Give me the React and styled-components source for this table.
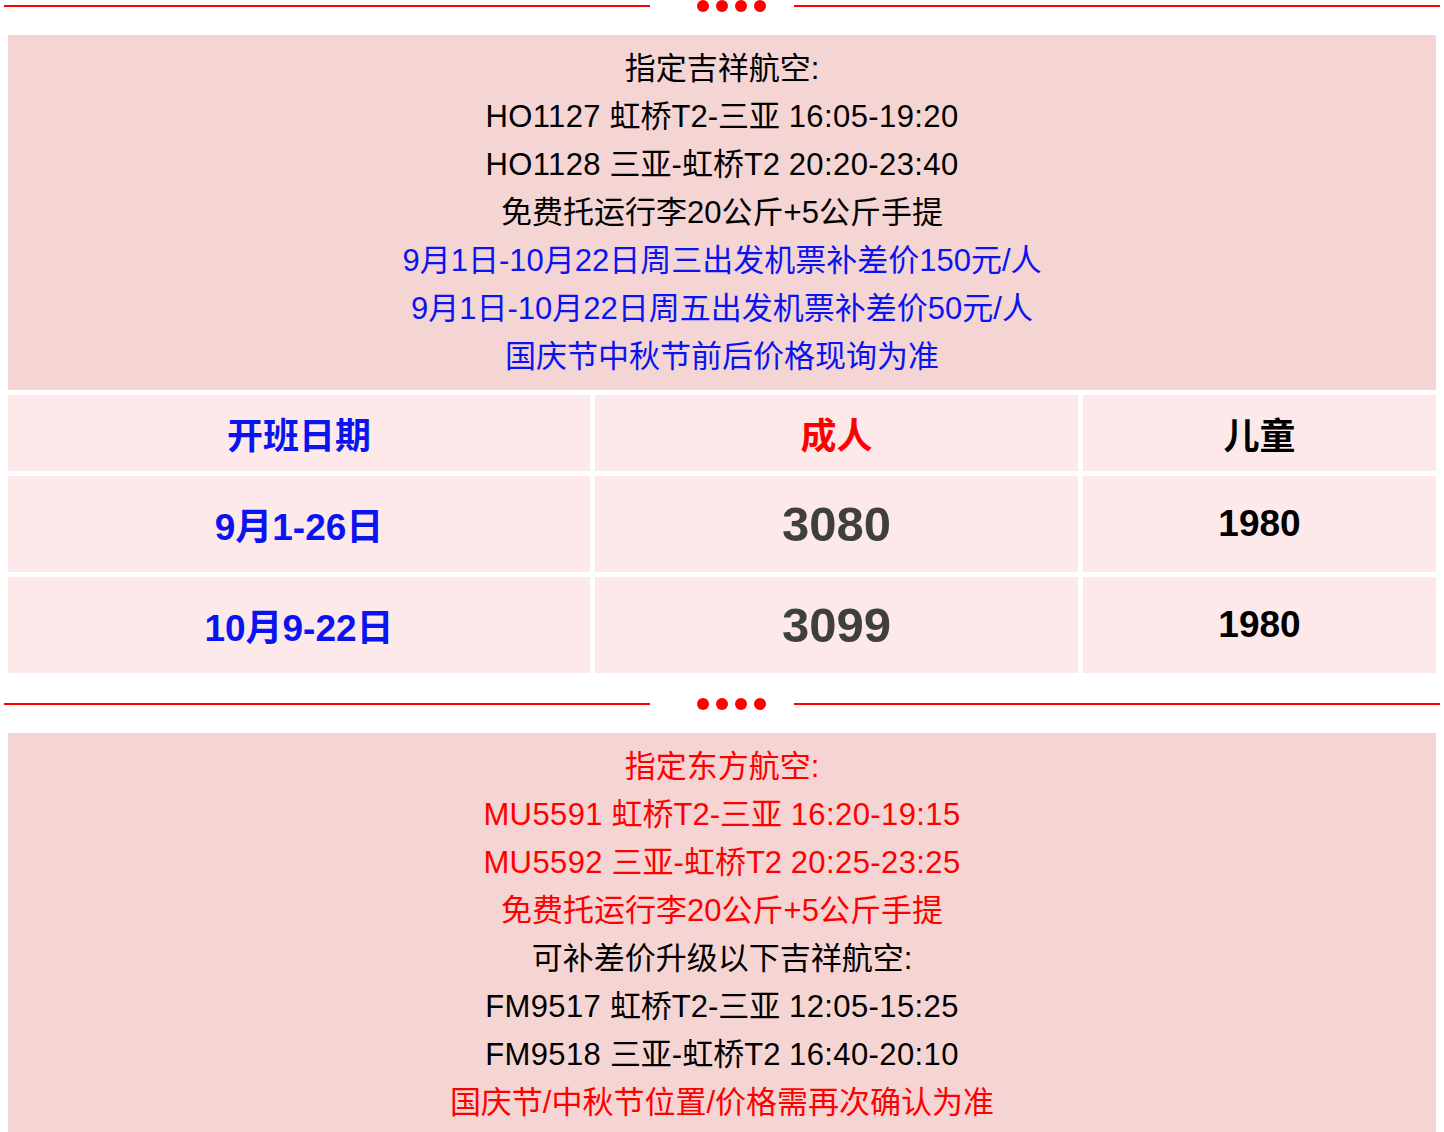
import React from "react";
import styled, { createGlobalStyle } from "styled-components";

const GlobalStyle = createGlobalStyle`
  html, body { margin: 0; padding: 0; background: #ffffff; }
  body { font-family: "Liberation Sans", "Noto Sans CJK SC", sans-serif; }
`;

const Page = styled.div`
  width: 1444px;
  display: flex;
  flex-direction: column;
`;

const Divider = styled.div`
  display: flex;
  align-items: center;
  height: 12px;
  padding: 0 4px;
  margin-top: ${(p) => p.$top || 0}px;
  margin-bottom: 23px;
`;

const Line = styled.div`
  width: 646px;
  height: 2px;
  background: #ff0000;
`;

const Dots = styled.div`
  display: flex;
  gap: 7px;
  margin: 0 28px 0 47px;
`;

const Dot = styled.span`
  width: 12px;
  height: 12px;
  border-radius: 50%;
  background: #ff0000;
`;

const InfoBox = styled.div`
  margin: 0 8px;
  background: #f5d4d4;
  padding: 10px 0 9px;
  display: flex;
  flex-direction: column;
  align-items: center;
`;

const InfoLine = styled.div`
  font-size: 31px;
  line-height: 48px;
  color: ${(p) => p.$color || "#000000"};
  white-space: nowrap;
`;

const Latin = styled.span`
  letter-spacing: 0.4px;
`;

const Table = styled.div`
  margin: 5px 8px 0;
  display: grid;
  grid-template-columns: 582px 483px 353px;
  grid-auto-rows: 96px;
  grid-template-rows: 76px;
  gap: 5px;
`;

const Cell = styled.div`
  background: #fde8ea;
  display: flex;
  align-items: center;
  justify-content: center;
  font-weight: bold;
  font-size: ${(p) => p.$size || 37}px;
  color: ${(p) => p.$color || "#000000"};
  white-space: nowrap;
`;

const BLUE = "#0a14f0";
const RED = "#ff0000";

function SectionDivider({ top }) {
  return (
    <Divider $top={top}>
      <Line />
      <Dots>
        <Dot />
        <Dot />
        <Dot />
        <Dot />
      </Dots>
      <Line />
    </Divider>
  );
}

const rows = [
  { date: "9月1-26日", adult: "3080", child: "1980" },
  { date: "10月9-22日", adult: "3099", child: "1980" },
];

function Flight({ code, route, time, color }) {
  return (
    <InfoLine $color={color}>
      <Latin>{code}</Latin> {route} <Latin>{time}</Latin>
    </InfoLine>
  );
}

export default function App() {
  return (
    <Page>
      <GlobalStyle />
      <SectionDivider top={0} />
      <InfoBox>
        <InfoLine>指定吉祥航空:</InfoLine>
        <Flight code="HO1127" route="虹桥T2-三亚" time="16:05-19:20" />
        <Flight code="HO1128" route="三亚-虹桥T2" time="20:20-23:40" />
        <InfoLine>免费托运行李20公斤+5公斤手提</InfoLine>
        <InfoLine $color={BLUE}>9月1日-10月22日周三出发机票补差价150元/人</InfoLine>
        <InfoLine $color={BLUE}>9月1日-10月22日周五出发机票补差价50元/人</InfoLine>
        <InfoLine $color={BLUE}>国庆节中秋节前后价格现询为准</InfoLine>
      </InfoBox>
      <Table>
        <Cell $color={BLUE} $size={36}>开班日期</Cell>
        <Cell $color={RED} $size={36}>成人</Cell>
        <Cell $size={36}>儿童</Cell>
        {rows.map((r) => (
          <React.Fragment key={r.date}>
            <Cell $color={BLUE}>{r.date}</Cell>
            <Cell $color="#3f3f3f" $size={49}>{r.adult}</Cell>
            <Cell>{r.child}</Cell>
          </React.Fragment>
        ))}
      </Table>
      <SectionDivider top={25} />
      <InfoBox>
        <InfoLine $color={RED}>指定东方航空:</InfoLine>
        <Flight color={RED} code="MU5591" route="虹桥T2-三亚" time="16:20-19:15" />
        <Flight color={RED} code="MU5592" route="三亚-虹桥T2" time="20:25-23:25" />
        <InfoLine $color={RED}>免费托运行李20公斤+5公斤手提</InfoLine>
        <InfoLine>可补差价升级以下吉祥航空:</InfoLine>
        <Flight code="FM9517" route="虹桥T2-三亚" time="12:05-15:25" />
        <Flight code="FM9518" route="三亚-虹桥T2" time="16:40-20:10" />
        <InfoLine $color={RED}>国庆节/中秋节位置/价格需再次确认为准</InfoLine>
      </InfoBox>
    </Page>
  );
}
